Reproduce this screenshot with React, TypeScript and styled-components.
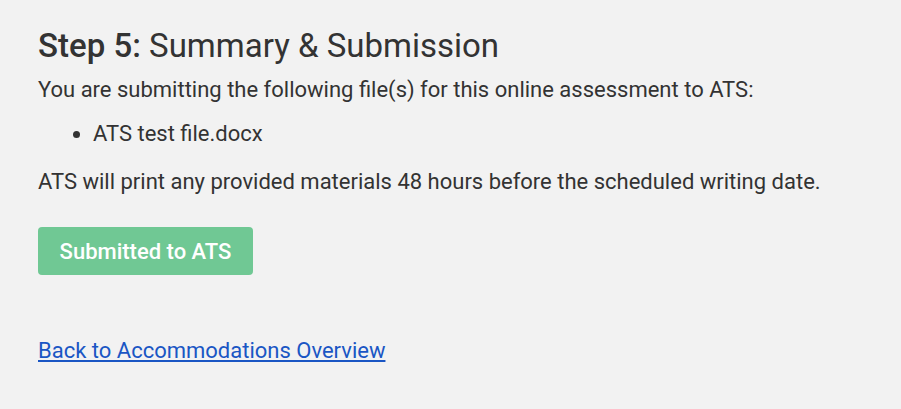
import React from "react";
import styled, { createGlobalStyle } from "styled-components";

const Global = createGlobalStyle`
  html, body { margin: 0; padding: 0; background: #f2f2f2; }
  body { font-family: Roboto, "Liberation Sans", Arial, sans-serif; color: #333; }
`;

const Page = styled.div`
  padding: 26px 38px;
  display: flex;
  flex-direction: column;
`;

const Title = styled.h2`
  margin: 0 0 9px;
  font-size: 33px;
  font-weight: 400;
  line-height: 40px;
  color: #333;
`;

const Strong = styled.span`
  font-weight: 500;
`;

const Para = styled.p`
  margin: 0;
  font-size: 22px;
  line-height: 30px;
  color: #333;
`;

const List = styled.ul`
  margin: 14px 0 18px;
  padding-left: 55px;
  font-size: 22px;
  line-height: 30px;
`;

const Button = styled.button`
  align-self: flex-start;
  margin-top: 30px;
  width: 215px;
  height: 48px;
  border: none;
  border-radius: 4px;
  background: #70c894;
  color: #fff;
  font-family: Roboto, "Liberation Sans", Arial, sans-serif;
  font-size: 22px;
  font-weight: 500;
`;

const Link = styled.a`
  margin-top: 61px;
  align-self: flex-start;
  font-size: 22px;
  line-height: 30px;
  color: #1a56c4;
  text-decoration: underline;
`;

export default function App() {
  return (
    <>
      <Global />
      <Page>
        <Title>
          <Strong>Step 5:</Strong> Summary &amp; Submission
        </Title>
        <Para>You are submitting the following file(s) for this online assessment to ATS:</Para>
        <List>
          <li>ATS test file.docx</li>
        </List>
        <Para>ATS will print any provided materials 48 hours before the scheduled writing date.</Para>
        <Button>Submitted to ATS</Button>
        <Link href="#">Back to Accommodations Overview</Link>
      </Page>
    </>
  );
}
